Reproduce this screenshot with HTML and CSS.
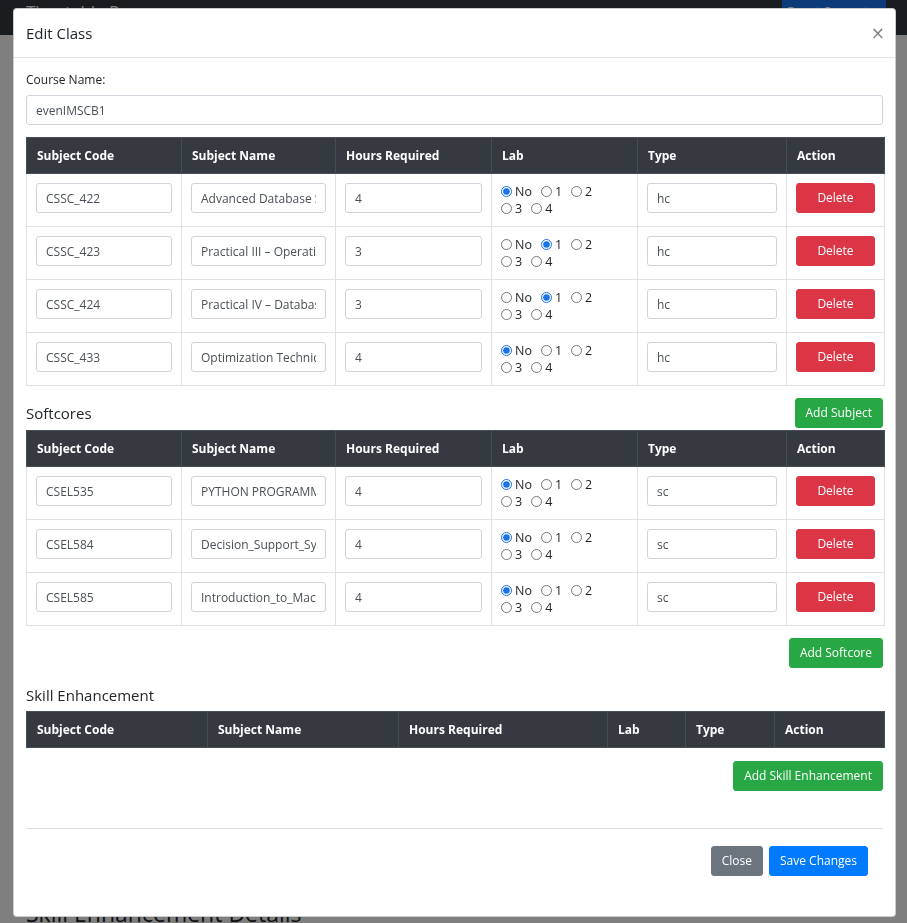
FILE: index.html
```html
<!DOCTYPE html>
<html lang="en">
<head>
<meta charset="utf-8">
<title>Edit Class</title>
<link rel="stylesheet" href="styles.css">
</head>
<body>
<nav class="navbar">
  <span class="brand">Timetable Pro</span>
  <ul class="nav-links">
    <li>Easy</li>
    <li>Generator</li>
    <li>Home</li>
    <li>Staff Details</li>
    <li>Schedule</li>
    <li>Workloads</li>
    <li>Export</li>
  </ul>
  <button class="nav-btn">Reset Semester</button>
</nav>
<main class="page">
  <h2 class="page-title">Skill Enhancement Details</h2>
</main>

<div class="backdrop"></div>

<div class="modal-wrap">
  <div class="modal">
    <div class="modal-header">
      <h5 class="modal-title">Edit Class</h5>
      <button class="close" aria-label="Close">&times;</button>
    </div>
    <div class="modal-body">
      <div class="form-group">
        <label class="field-label">Course Name:</label>
        <input class="form-control" type="text" value="evenIMSCB1">
      </div>

      <table class="grid">
        <colgroup>
          <col class="c1"><col class="c2"><col class="c3"><col class="c4"><col class="c5"><col class="c6">
        </colgroup>
        <thead>
          <tr><th>Subject Code</th><th>Subject Name</th><th>Hours Required</th><th>Lab</th><th>Type</th><th>Action</th></tr>
        </thead>
        <tbody>
          <tr>
            <td><input class="form-control" value="CSSC_422"></td>
            <td><input class="form-control" value="Advanced Database Systems"></td>
            <td><input class="form-control" value="4"></td>
            <td class="lab">
              <label class="radio"><input type="radio" name="h1" checked>No</label><label class="radio"><input type="radio" name="h1">1</label><label class="radio"><input type="radio" name="h1">2</label><label class="radio"><input type="radio" name="h1">3</label><label class="radio"><input type="radio" name="h1">4</label>
            </td>
            <td><input class="form-control" value="hc"></td>
            <td><button class="btn btn-danger btn-block">Delete</button></td>
          </tr>
          <tr>
            <td><input class="form-control" value="CSSC_423"></td>
            <td><input class="form-control" value="Practical III – Operating Systems Lab"></td>
            <td><input class="form-control" value="3"></td>
            <td class="lab">
              <label class="radio"><input type="radio" name="h2">No</label><label class="radio"><input type="radio" name="h2" checked>1</label><label class="radio"><input type="radio" name="h2">2</label><label class="radio"><input type="radio" name="h2">3</label><label class="radio"><input type="radio" name="h2">4</label>
            </td>
            <td><input class="form-control" value="hc"></td>
            <td><button class="btn btn-danger btn-block">Delete</button></td>
          </tr>
          <tr>
            <td><input class="form-control" value="CSSC_424"></td>
            <td><input class="form-control" value="Practical IV – Database Lab"></td>
            <td><input class="form-control" value="3"></td>
            <td class="lab">
              <label class="radio"><input type="radio" name="h3">No</label><label class="radio"><input type="radio" name="h3" checked>1</label><label class="radio"><input type="radio" name="h3">2</label><label class="radio"><input type="radio" name="h3">3</label><label class="radio"><input type="radio" name="h3">4</label>
            </td>
            <td><input class="form-control" value="hc"></td>
            <td><button class="btn btn-danger btn-block">Delete</button></td>
          </tr>
          <tr>
            <td><input class="form-control" value="CSSC_433"></td>
            <td><input class="form-control" value="Optimization Techniques"></td>
            <td><input class="form-control" value="4"></td>
            <td class="lab">
              <label class="radio"><input type="radio" name="h4" checked>No</label><label class="radio"><input type="radio" name="h4">1</label><label class="radio"><input type="radio" name="h4">2</label><label class="radio"><input type="radio" name="h4">3</label><label class="radio"><input type="radio" name="h4">4</label>
            </td>
            <td><input class="form-control" value="hc"></td>
            <td><button class="btn btn-danger btn-block">Delete</button></td>
          </tr>
        </tbody>
      </table>

      <div class="section-head">
        <h5 class="section-title">Softcores</h5>
        <button class="btn btn-success">Add Subject</button>
      </div>

      <table class="grid">
        <colgroup>
          <col class="c1"><col class="c2"><col class="c3"><col class="c4"><col class="c5"><col class="c6">
        </colgroup>
        <thead>
          <tr><th>Subject Code</th><th>Subject Name</th><th>Hours Required</th><th>Lab</th><th>Type</th><th>Action</th></tr>
        </thead>
        <tbody>
          <tr>
            <td><input class="form-control" value="CSEL535"></td>
            <td><input class="form-control" value="PYTHON PROGRAMMING"></td>
            <td><input class="form-control" value="4"></td>
            <td class="lab">
              <label class="radio"><input type="radio" name="s1" checked>No</label><label class="radio"><input type="radio" name="s1">1</label><label class="radio"><input type="radio" name="s1">2</label><label class="radio"><input type="radio" name="s1">3</label><label class="radio"><input type="radio" name="s1">4</label>
            </td>
            <td><input class="form-control" value="sc"></td>
            <td><button class="btn btn-danger btn-block">Delete</button></td>
          </tr>
          <tr>
            <td><input class="form-control" value="CSEL584"></td>
            <td><input class="form-control" value="Decision_Support_Systems"></td>
            <td><input class="form-control" value="4"></td>
            <td class="lab">
              <label class="radio"><input type="radio" name="s2" checked>No</label><label class="radio"><input type="radio" name="s2">1</label><label class="radio"><input type="radio" name="s2">2</label><label class="radio"><input type="radio" name="s2">3</label><label class="radio"><input type="radio" name="s2">4</label>
            </td>
            <td><input class="form-control" value="sc"></td>
            <td><button class="btn btn-danger btn-block">Delete</button></td>
          </tr>
          <tr>
            <td><input class="form-control" value="CSEL585"></td>
            <td><input class="form-control" value="Introduction_to_Machine_Learning"></td>
            <td><input class="form-control" value="4"></td>
            <td class="lab">
              <label class="radio"><input type="radio" name="s3" checked>No</label><label class="radio"><input type="radio" name="s3">1</label><label class="radio"><input type="radio" name="s3">2</label><label class="radio"><input type="radio" name="s3">3</label><label class="radio"><input type="radio" name="s3">4</label>
            </td>
            <td><input class="form-control" value="sc"></td>
            <td><button class="btn btn-danger btn-block">Delete</button></td>
          </tr>
        </tbody>
      </table>

      <div class="actions actions-gap">
        <button class="btn btn-success">Add Softcore</button>
      </div>

      <h5 class="section-title skill-title">Skill Enhancement</h5>
      <table class="grid grid-last">
        <colgroup>
          <col class="k1"><col class="k2"><col class="k3"><col class="k4"><col class="k5"><col class="k6">
        </colgroup>
        <thead>
          <tr><th>Subject Code</th><th>Subject Name</th><th>Hours Required</th><th>Lab</th><th>Type</th><th>Action</th></tr>
        </thead>
        <tbody></tbody>
      </table>

      <div class="actions">
        <button class="btn btn-success">Add Skill Enhancement</button>
      </div>

      <hr class="divider">

      <div class="footer">
        <button class="btn btn-secondary">Close</button>
        <button class="btn btn-primary">Save Changes</button>
      </div>
    </div>
  </div>
</div>
</body>
</html>
```

FILE: styles.css
```css
* {
  box-sizing: border-box;
}

html, body {
  margin: 0;
  height: 100%;
  overflow: hidden;
}

body {
  font-family: "Open Sans", "Noto Sans", sans-serif;
  font-size: 12px;
  color: #212529;
  background: #ffffff;
}

/* ---------- page underneath ---------- */
.navbar {
  height: 35px;
  background: #343a40;
  display: flex;
  align-items: flex-start;
  padding: 0 21px 0 26px;
}

.brand {
  color: #ffffff;
  font-size: 17px;
  line-height: 20px;
  padding-top: 2px;
  margin-right: 20px;
}

.nav-links {
  list-style: none;
  display: flex;
  gap: 18px;
  margin: 0;
  padding: 4px 0 0;
  color: rgba(255, 255, 255, 0.55);
  font-size: 13px;
  line-height: 18px;
}

.nav-btn {
  margin-left: auto;
  width: 104px;
  height: 35px;
  border: none;
  background: #1a74f0;
  color: #ffffff;
  font-family: inherit;
  font-size: 13px;
  padding: 2px 0 0;
  display: flex;
  justify-content: center;
  align-items: flex-start;
}

.page {
  padding: 864px 26px 0;
}

.page-title {
  margin: 0;
  font-size: 23px;
  line-height: 28px;
  font-weight: 400;
  color: #212529;
}

/* ---------- modal ---------- */
.backdrop {
  position: fixed;
  inset: 0;
  background: rgba(0, 0, 0, 0.5);
}

.modal-wrap {
  position: fixed;
  inset: 0;
  padding: 8px 0 0 13px;
}

.modal {
  width: 883px;
  background: #ffffff;
  border: 1px solid rgba(0, 0, 0, 0.2);
  border-radius: 4px;
}

.modal-header {
  height: 49px;
  display: flex;
  align-items: center;
  justify-content: space-between;
  padding: 0 12px 0 12px;
  border-bottom: 1px solid #dee2e6;
}

.modal-title {
  margin: 0;
  font-size: 15px;
  font-weight: 400;
  line-height: 20px;
  color: #212529;
}

.close {
  border: none;
  background: transparent;
  padding: 0;
  margin-right: -2px;
  font-family: "DejaVu Sans", sans-serif;
  font-size: 17px;
  line-height: 20px;
  color: #000000;
  opacity: 0.5;
}

.modal-body {
  padding: 13px 12px 40px;
}

.field-label {
  display: block;
  line-height: 18px;
  margin-bottom: 6px;
}

.form-group {
  margin-bottom: 12px;
}

.form-control {
  display: block;
  width: 100%;
  height: 30px;
  padding: 0 9px;
  border: 1px solid #ced4da;
  border-radius: 3px;
  font-family: inherit;
  font-size: 12px;
  color: #495057;
  background: #ffffff;
}

/* ---------- tables ---------- */
.grid {
  width: 100%;
  border-collapse: collapse;
  table-layout: fixed;
  margin-bottom: 12px;
}

.grid-last {
  margin-bottom: 13px;
}

.c1 { width: 155px; }
.c2 { width: 154px; }
.c3 { width: 156px; }
.c4 { width: 146px; }
.c5 { width: 149px; }
.c6 { width: 98px; }

.k1 { width: 181px; }
.k2 { width: 191px; }
.k3 { width: 209px; }
.k4 { width: 78px; }
.k5 { width: 89px; }
.k6 { width: 110px; }

.grid th {
  background: #343a40;
  color: #ffffff;
  text-align: left;
  font-weight: 700;
  font-size: 12px;
  line-height: 17px;
  padding: 9px 10px;
  border: 1px solid #454d55;
}

.grid td {
  padding: 9px 9px;
  border: 1px solid #dee2e6;
  vertical-align: top;
}

.lab {
  line-height: 17px;
  font-size: 12.5px;
  color: #212529;
}

.radio {
  display: inline-block;
  white-space: nowrap;
  margin-right: 9px;
}

.radio input {
  width: 11px;
  height: 11px;
  margin: 0 3px 0 0;
  vertical-align: -1px;
  accent-color: #1a73e8;
}

/* ---------- buttons ---------- */
.btn {
  display: inline-block;
  height: 30px;
  padding: 0 10px;
  border: 1px solid transparent;
  border-radius: 3px;
  font-family: inherit;
  font-size: 12px;
  line-height: 28px;
  color: #ffffff;
  cursor: pointer;
}

.btn-block {
  display: block;
  width: 100%;
}

.btn-danger { background: #dc3545; border-color: #dc3545; }
.btn-success { background: #28a745; border-color: #28a745; }
.btn-secondary { background: #6c757d; border-color: #6c757d; }
.btn-primary { background: #007bff; border-color: #007bff; }

.section-head {
  display: flex;
  justify-content: space-between;
  align-items: center;
  margin-bottom: 2px;
}

.section-title {
  margin: 0;
  font-size: 15px;
  font-weight: 400;
  line-height: 20px;
  color: #212529;
}

.skill-title {
  margin-bottom: 6px;
}

.actions {
  display: flex;
  justify-content: flex-end;
}

.actions-gap {
  margin-bottom: 17px;
}

.divider {
  margin: 37px 0 0;
  border: none;
  border-top: 1px solid #dee2e6;
}

.footer {
  display: flex;
  justify-content: flex-end;
  gap: 6px;
  padding: 17px 15px 0 0;
}
```
